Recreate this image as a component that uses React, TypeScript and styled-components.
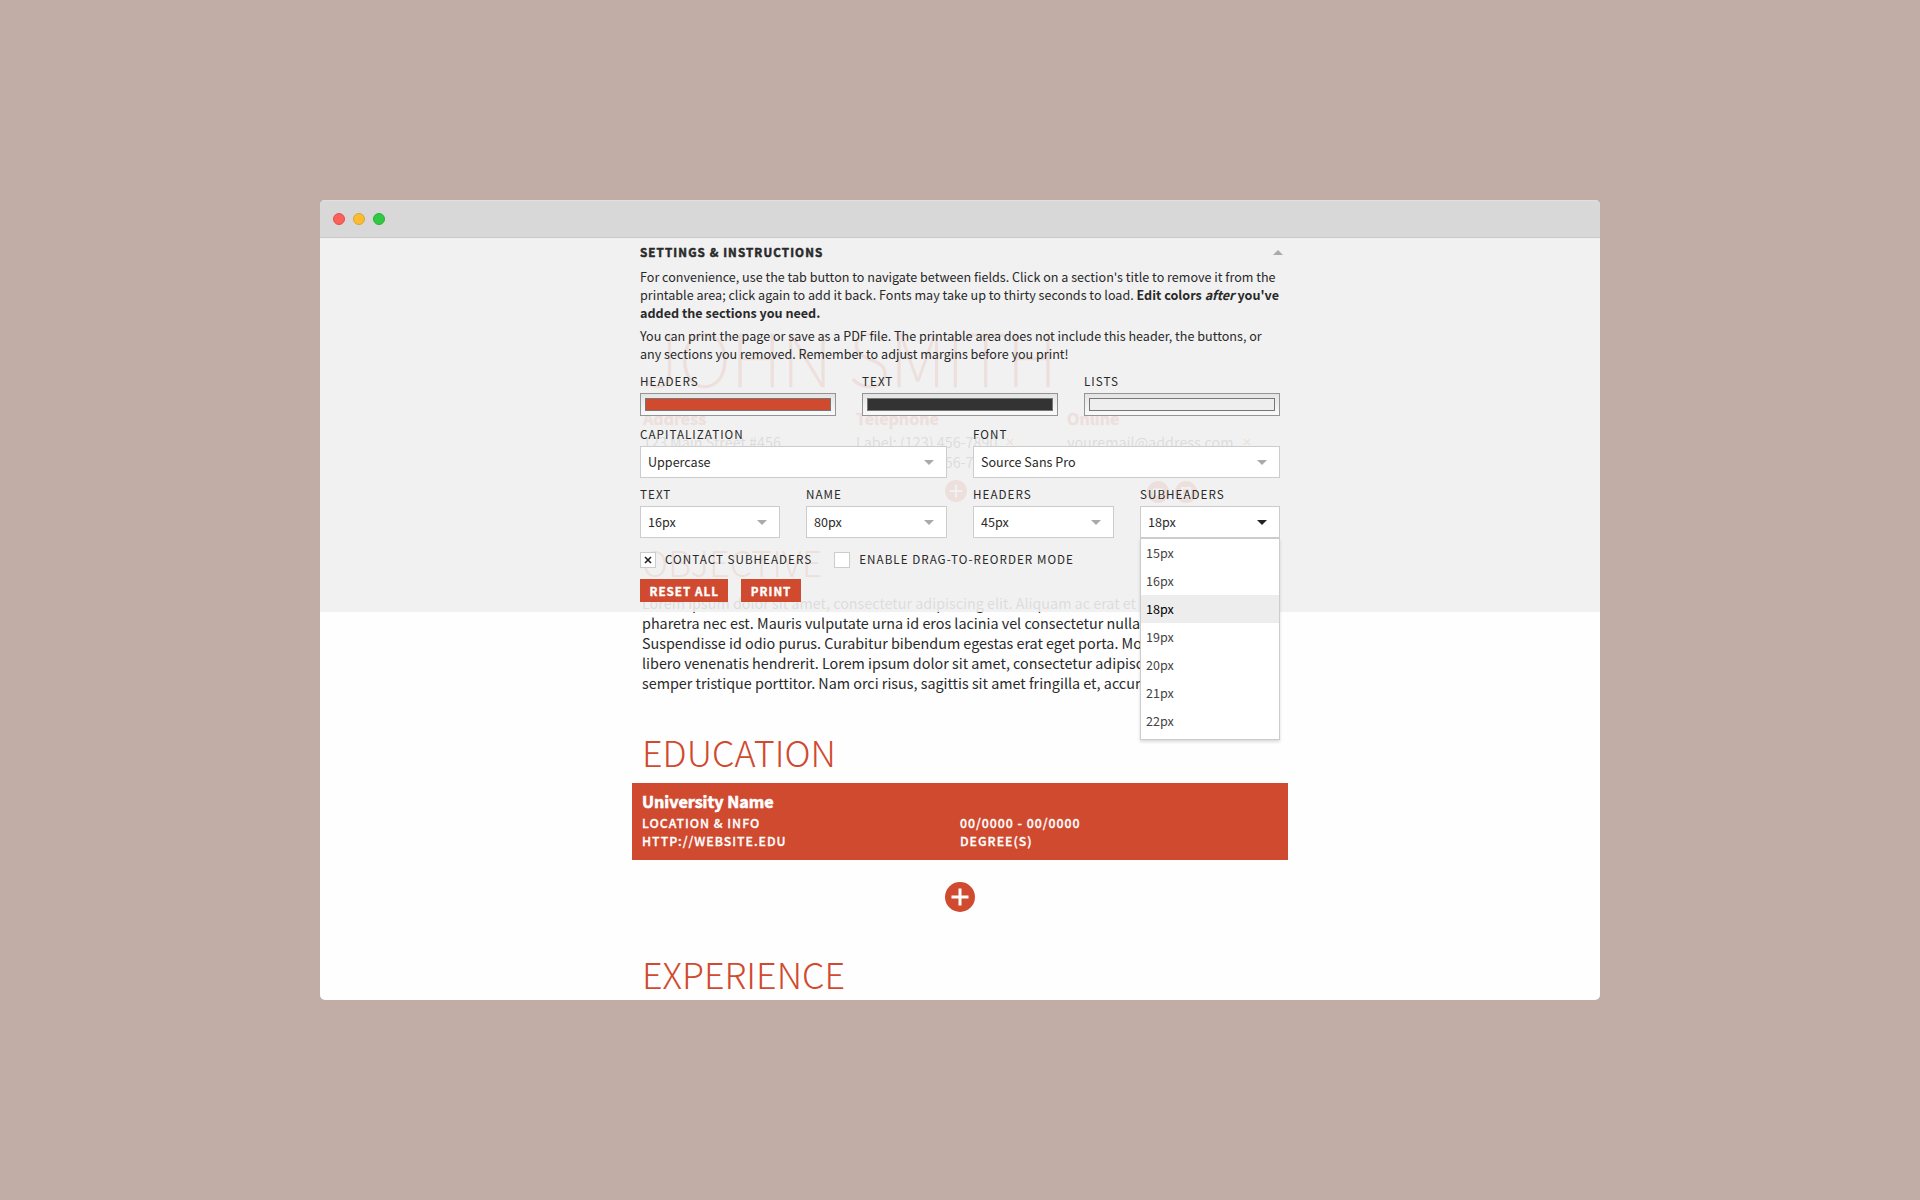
import React from "react";
import styled, { createGlobalStyle, css } from "styled-components";

const RED = "#d04a2f";
const INK = "#333333";
const TEXT = "#292929";

const Global = createGlobalStyle`
  *, *::before, *::after { box-sizing: border-box; }
  body {
    margin: 0;
    background: #c2aca6;
    font-family: "Source Sans Pro", "Noto Sans CJK SC", sans-serif;
    color: ${TEXT};
  }
  p, h1, h2, h3 { margin: 0; }
`;

const Stage = styled.main`
  width: 1920px;
  height: 1200px;
  display: flex;
  align-items: center;
  justify-content: center;
`;

const Window = styled.div`
  width: 1280px;
  height: 800px;
  border-radius: 5px;
  overflow: hidden;
  background: #fefefe;
  display: flex;
  flex-direction: column;
`;

const TitleBar = styled.header`
  height: 38px;
  flex: none;
  background: #d8d8d8;
  border-top: 1px solid #e2e0df;
  border-bottom: 1px solid #c9c9c9;
  display: flex;
  align-items: center;
  gap: 8px;
  padding-left: 13px;
`;

const Light = styled.span<{ $fill: string; $edge: string }>`
  width: 12px;
  height: 12px;
  border-radius: 50%;
  background: ${(p) => p.$fill};
  border: 1px solid ${(p) => p.$edge};
`;

const Viewport = styled.div`
  position: relative;
  flex: 1;
  overflow: hidden;
`;

/* ---------- résumé page ---------- */

const Page = styled.article`
  width: 656px;
  margin: 0 auto;
`;

const Name = styled.h1`
  padding: 67px 0 0 10px;
  font-size: 72.9px;
  font-weight: 100;
  line-height: 101px;
  color: ${RED};
  white-space: nowrap;
  -webkit-text-stroke: 0.5px currentColor;
`;

const Contact = styled.section`
  display: grid;
  grid-template-columns: 213px 211px 1fr;
  padding-left: 11px;
  height: 74px;
`;

const ContactTitle = styled.h3`
  margin-bottom: 1px;
  font-size: 16.1px;
  font-weight: 700;
  line-height: 25px;
  color: ${RED};
  -webkit-text-stroke: 0.5px currentColor;
`;

const ContactLine = styled.p`
  display: flex;
  align-items: center;
  gap: 9px;
  font-size: 14.35px;
  line-height: 20px;
  white-space: nowrap;
`;

const AddRow = styled.div`
  height: 85px;
  padding: 22px 0 0 313px;
`;

const IconStrip = styled.div`
  display: flex;
  height: 22px;
  margin-bottom: 31px;
  padding-left: 313px;
  gap: 180px;
`;

const IconPair = styled.div`
  display: flex;
  gap: 6px;
  padding-top: 1px;
`;

const SectionTitle = styled.h2`
  padding-left: 10px;
  font-size: 35.9px;
  font-weight: 300;
  line-height: 56px;
  color: ${RED};
  white-space: nowrap;
`;

const Body = styled.p`
  padding: 4px 0 0 10px;
  height: 134px;
  font-size: 14.35px;
  line-height: 20px;
  white-space: nowrap;
`;

const School = styled.section`
  height: 77px;
  margin-top: 4px;
  padding: 7px 10px 0;
  background: ${RED};
  color: #fff;
`;

const SchoolName = styled.h3`
  font-size: 16.1px;
  font-weight: 700;
  line-height: 23px;
  -webkit-text-stroke: 0.6px currentColor;
`;

const SchoolGrid = styled.div`
  display: grid;
  grid-template-columns: 318px 1fr;
  margin-top: 1px;
  font-size: 12.3px;
  font-weight: 500;
  line-height: 18px;
  letter-spacing: 1px;
  text-transform: uppercase;
  -webkit-text-stroke: 0.3px currentColor;
`;

/* ---------- settings panel, pinned over the page ---------- */

const Settings = styled.aside`
  position: absolute;
  inset: 0 0 auto 0;
  height: 374px;
  background: rgba(239, 239, 239, 0.9);
  display: flex;
  justify-content: center;
`;

const SettingsInner = styled.div`
  width: 640px;
  padding-top: 4px;
`;

const SettingsHead = styled.div`
  display: flex;
  justify-content: space-between;
  align-items: center;
  height: 21px;
  margin-right: -3px;
  padding-bottom: 1px;
`;

const SettingsTitle = styled.h2`
  font-size: 11.65px;
  font-weight: 700;
  line-height: 20px;
  letter-spacing: 1.1px;
  -webkit-text-stroke: 0.5px currentColor;
`;

const Para = styled.p`
  font-size: 12.58px;
  line-height: 18px;
  white-space: nowrap;
  margin-top: 5px;
  b { font-weight: 700; }
`;

const Fields = styled.div<{ $cols: string; $top: number }>`
  display: grid;
  grid-template-columns: ${(p) => p.$cols};
  column-gap: 26px;
  margin-top: ${(p) => p.$top}px;
`;

const Field = styled.div`
  position: relative;
`;

const Label = styled.div`
  font-size: 11.65px;
  line-height: 18px;
  letter-spacing: 1.03px;
  text-transform: uppercase;
  white-space: nowrap;
`;

const Swatch = styled.div<{ $color: string }>`
  height: 23px;
  margin-top: 3px;
  padding: 4px;
  border: 1px solid #949494;
  background: linear-gradient(#e4e4e4, #f8f8f8 90%);
  &::before {
    content: "";
    display: block;
    height: 13px;
    border: 1px solid #777;
    background: ${(p) => p.$color};
  }
`;

const Arrow = styled.span<{ $up?: boolean; $color?: string }>`
  width: 0;
  height: 0;
  border: 5px solid transparent;
  ${(p) =>
    p.$up
      ? css`border-top: 0; border-bottom-color: ${p.$color ?? "#aaa"};`
      : css`border-bottom: 0; border-top-color: ${p.$color ?? "#aaa"};`}
`;

const SelectBox = styled.div`
  display: flex;
  align-items: center;
  justify-content: space-between;
  height: 32px;
  margin-top: 3px;
  padding: 0 12px 2px 7px;
  border: 1px solid #cccccc;
  background: #fff;
  font-size: 12.575px;
  ${Arrow} { margin-top: 3px; }
`;

const Menu = styled.div`
  position: absolute;
  top: 100%;
  left: 0;
  right: 0;
  height: 202px;
  border: 1px solid #cccccc;
  background: #fff;
  box-shadow: 0 2px 3px rgba(0, 0, 0, 0.14);
`;

const Option = styled.div<{ $active: boolean }>`
  height: 28px;
  padding-left: 5px;
  font-size: 12.575px;
  line-height: 28px;
  color: ${(p) => (p.$active ? "#000" : "#444")};
  background: ${(p) => (p.$active ? "#ededed" : "transparent")};
`;

const Checks = styled.div`
  display: flex;
  align-items: center;
  gap: 22px;
  margin-top: 14px;
  height: 16px;
`;

const Check = styled.div`
  display: flex;
  align-items: center;
  gap: 9px;
  height: 16px;
  ${Label} { margin-top: -2px; }
`;

const Box = styled.span`
  width: 16px;
  height: 16px;
  border: 1px solid #cccccc;
  background: #fff;
  display: flex;
  align-items: center;
  justify-content: center;
`;

const Actions = styled.div`
  display: flex;
  gap: 13px;
  margin-top: 11px;
`;

const Button = styled.button`
  height: 23px;
  padding: 0 9.5px;
  border: 0;
  background: ${RED};
  color: #fff;
  font-family: inherit;
  font-size: 11.65px;
  font-weight: 700;
  line-height: 23px;
  letter-spacing: 1px;
  text-transform: uppercase;
  -webkit-text-stroke: 0.35px currentColor;
`;

const Plus = ({ size }: { size: number }) => (
  <svg width={size} height={size} viewBox="0 0 30 30" display="block">
    <circle cx="15" cy="15" r="15" fill={RED} />
    <path d="M15 6.5v17M6.5 15h17" stroke="#fff" strokeWidth="3" />
  </svg>
);

const Cross = ({ size, color, width }: { size: number; color: string; width: number }) => (
  <svg width={size} height={size} viewBox="0 0 8 8">
    <path d="M1 1l6 6M7 1l-6 6" stroke={color} strokeWidth={width} />
  </svg>
);

const MailIcon = () => (
  <svg width="22" height="22" viewBox="0 0 22 22">
    <circle cx="11" cy="11" r="11" fill={RED} />
    <path d="M6 7.5h10v7H6z" fill="#fff" />
  </svg>
);

const SiteIcon = () => (
  <svg width="22" height="22" viewBox="0 0 22 22">
    <circle cx="11" cy="11" r="11" fill={RED} />
    <path d="M6 6h10v10H6zM8 8v5h6V8z" fill="#fff" fillRule="evenodd" />
  </svg>
);

const colors = [
  { label: "Headers", color: RED },
  { label: "Text", color: INK },
  { label: "Lists", color: "#eeeeee" },
];

const sizes = [
  { label: "Text", value: "16px" },
  { label: "Name", value: "80px" },
  { label: "Headers", value: "45px" },
  { label: "Subheaders", value: "18px", open: true },
];

const options = ["15px", "16px", "18px", "19px", "20px", "21px", "22px"];

function Resume() {
  return (
    <Page>
      <Name>JOHN SMITH</Name>
      <Contact>
        <div>
          <ContactTitle>Address</ContactTitle>
          <ContactLine>123 Main Street #456</ContactLine>
        </div>
        <div>
          <ContactTitle>Telephone</ContactTitle>
          <ContactLine>Label: (123) 456-7890 <Cross size={8} color={RED} width={1.3} /></ContactLine>
          <ContactLine>Label: (123) 456-7890</ContactLine>
        </div>
        <div>
          <ContactTitle>Online</ContactTitle>
          <ContactLine>youremail@address.com <Cross size={8} color={RED} width={1.3} /></ContactLine>
        </div>
      </Contact>
      <IconStrip>
        <Plus size={22} />
        <IconPair><MailIcon /><SiteIcon /></IconPair>
      </IconStrip>
      <SectionTitle>OBJECTIVE</SectionTitle>
      <Body>
        Lorem ipsum dolor sit amet, consectetur adipiscing elit. Aliquam ac erat et<br />
        pharetra nec est. Mauris vulputate urna id eros lacinia vel consectetur nulla<br />
        Suspendisse id odio purus. Curabitur bibendum egestas erat eget porta. Morbi<br />
        libero venenatis hendrerit. Lorem ipsum dolor sit amet, consectetur adipiscing<br />
        semper tristique porttitor. Nam orci risus, sagittis sit amet fringilla et, accumsan
      </Body>
      <SectionTitle>EDUCATION</SectionTitle>
      <School>
        <SchoolName>University Name</SchoolName>
        <SchoolGrid>
          <span>Location &amp; Info</span>
          <span>00/0000 - 00/0000</span>
          <span>http://website.edu</span>
          <span>Degree(s)</span>
        </SchoolGrid>
      </School>
      <AddRow><Plus size={30} /></AddRow>
      <SectionTitle>EXPERIENCE</SectionTitle>
    </Page>
  );
}

export default function App() {
  return (
    <Stage>
      <Global />
      <Window>
        <TitleBar>
          <Light $fill="#fc605b" $edge="#e0504b" />
          <Light $fill="#fdbc30" $edge="#e0a22b" />
          <Light $fill="#2fca41" $edge="#2cae3a" />
        </TitleBar>
        <Viewport>
          <Resume />
          <Settings>
            <SettingsInner>
              <SettingsHead>
                <SettingsTitle>SETTINGS &amp; INSTRUCTIONS</SettingsTitle>
                <Arrow $up />
              </SettingsHead>
              <Para>
                For convenience, use the tab button to navigate between fields. Click on a section's title to remove it from the<br />
                printable area; click again to add it back. Fonts may take up to thirty seconds to load. <b>Edit colors <i>after</i> you've</b><br />
                <b>added the sections you need.</b>
              </Para>
              <Para>
                You can print the page or save as a PDF file. The printable area does not include this header, the buttons, or<br />
                any sections you removed. Remember to adjust margins before you print!
              </Para>
              <Fields $cols="repeat(3, 1fr)" $top={9}>
                {colors.map((c) => (
                  <Field key={c.label}>
                    <Label>{c.label}</Label>
                    <Swatch $color={c.color} />
                  </Field>
                ))}
              </Fields>
              <Fields $cols="1fr 1fr" $top={9}>
                <Field>
                  <Label>Capitalization</Label>
                  <SelectBox>Uppercase<Arrow /></SelectBox>
                </Field>
                <Field>
                  <Label>Font</Label>
                  <SelectBox>Source Sans Pro<Arrow /></SelectBox>
                </Field>
              </Fields>
              <Fields $cols="140px 141px 141px 140px" $top={7}>
                {sizes.map((s) => (
                  <Field key={s.label}>
                    <Label>{s.label}</Label>
                    <SelectBox>{s.value}<Arrow $color={s.open ? "#222" : undefined} /></SelectBox>
                    {s.open && (
                      <Menu>
                        {options.map((o) => (
                          <Option key={o} $active={o === s.value}>{o}</Option>
                        ))}
                      </Menu>
                    )}
                  </Field>
                ))}
              </Fields>
              <Checks>
                <Check>
                  <Box><Cross size={8} color="#222" width={1.6} /></Box>
                  <Label>Contact subheaders</Label>
                </Check>
                <Check>
                  <Box />
                  <Label>Enable drag-to-reorder mode</Label>
                </Check>
              </Checks>
              <Actions>
                <Button>Reset all</Button>
                <Button>Print</Button>
              </Actions>
            </SettingsInner>
          </Settings>
        </Viewport>
      </Window>
    </Stage>
  );
}
